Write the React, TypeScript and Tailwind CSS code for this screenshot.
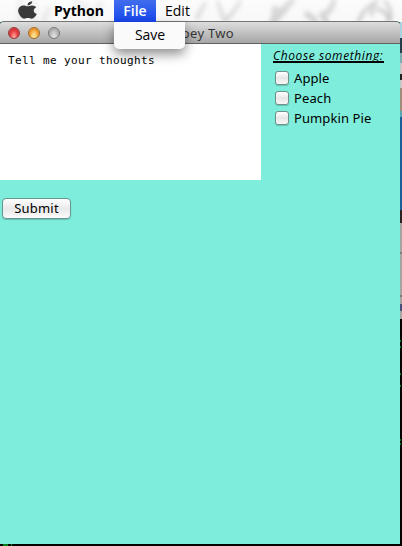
import React from 'react';
import { FaApple } from 'react-icons/fa';

const options = ['Apple', 'Peach', 'Pumpkin Pie'];

function Desktop() {
  return (
    <svg className="absolute inset-0" width="402" height="546" viewBox="0 0 402 546">
      <defs>
        <linearGradient id="bar" x1="0" y1="0" x2="0" y2="1">
          <stop offset="0" stopColor="#fff" stopOpacity=".5" />
          <stop offset="1" stopColor="#f4f4f4" stopOpacity=".25" />
        </linearGradient>
        <filter id="soft" x="-5%" y="-50%" width="110%" height="200%"><feGaussianBlur stdDeviation="1.9" /></filter>
      </defs>
      <rect width="402" height="546" fill="#000" />
      <rect width="402" height="22" fill="#f9faf9" />
      <g filter="url(#soft)" fill="none" stroke="#b9bbb9" strokeLinecap="round">
        <path d="M20 0v21M34 1v20M48 10l-4 10M76 2l10 4M92 17l8-13" strokeWidth="7" opacity=".3" />
        <path d="M218 2q2 8 6 17M240 1q-3 8-14 19M205 3l-8 15" strokeWidth="4" opacity=".75" />
        <path d="M273 21l12-12M292 1l-12 11M275 9v10" strokeWidth="7" opacity=".85" />
        <path d="M334 0q-2 9-8 13M322 14l4 7M307 14l8 6" strokeWidth="6" opacity=".85" />
        <path d="M359 20q6-13 18-19M377 1q-7 8-5 13M377 9q10 1 12 12M385 1q8 9 5 19" strokeWidth="4" />
      </g>
      <rect width="402" height="22" fill="url(#bar)" />
      <rect x="400" y="22" width="2" height="16" fill="#a8d1df" />
      <rect x="400" y="38" width="2" height="15" fill="#263d49" />
      <rect x="400" y="53" width="2" height="10" fill="#7eabb4" />
      <rect x="400" y="63" width="2" height="25" fill="#c6c6c6" />
      <rect x="400" y="74" width="2" height="6" fill="#222" />
      <rect x="400" y="88" width="2" height="23" fill="#9b8d77" />
      <rect x="400" y="111" width="2" height="6" fill="#55a5b5" />
      <rect x="400" y="117" width="2" height="93" fill="#1b5f96" />
      <rect x="400" y="210" width="2" height="13" fill="#272322" />
      <rect x="400" y="223" width="2" height="96" fill="#a5a4a2" />
      <path d="M400 253h2M400 296h2" stroke="#555" />
      <rect x="400" y="304" width="2" height="7" fill="#44517a" />
      <path d="M400 341h1M400 347h1M400 374h1M400 386h1M400 440h1M400 444h1M3 545h5M11 545h1" stroke="#087e1c" strokeWidth="2" />
    </svg>
  );
}

function MenuBar() {
  return (
    <header className="relative flex h-[22px] items-center font-['Open_Sans','Noto_Sans',sans-serif] text-[14px] leading-[22px] text-black">
      <FaApple className="mb-[2px] ml-[18px] h-[20px] w-[19px] shrink-0 text-[#393939]" preserveAspectRatio="none" />
      <span className="ml-[17px] w-[60px] font-bold">Python</span>
      <span className="h-[22px] w-[42px] bg-linear-to-b from-[#416ced] to-[#1745ed] text-center font-semibold text-white">File</span>
      <span className="ml-[9px] font-medium">Edit</span>
      <div className="absolute left-[114px] top-[22px] z-10 h-[27px] w-[71px] rounded-b-[5px] bg-[#fafafa] pl-[21px] leading-[26px] shadow-[0_5px_12px_rgba(0,0,0,0.45)]">
        <span className="font-medium tracking-[-0.1px]">Save</span>
      </div>
    </header>
  );
}

function TitleBar() {
  return (
    <div className="relative flex h-[23px] items-center rounded-t-[4px] border-b border-t border-[#606060] border-t-[#747474] bg-linear-to-b from-[#dedede] to-[#a6a6a6] font-['Noto_Sans',sans-serif]">
      <div className="flex gap-2 pl-2">
        <i className="h-3 w-3 rounded-full border border-[#963a3b] bg-[radial-gradient(ellipse_at_50%_90%,#ffb1a5,#ee4b4c_45%,#d32f35_65%,#f2a5a3)]" />
        <i className="h-3 w-3 rounded-full border border-[#a16826] bg-[radial-gradient(ellipse_at_50%_90%,#ffeda5,#f6bc59_45%,#e78e24_65%,#f8dca6)]" />
        <i className="h-3 w-3 rounded-full border border-[#777] bg-[radial-gradient(ellipse_at_50%_90%,#e5e5e5,#c4c4c4_45%,#aaa_65%,#ddd)]" />
      </div>
      <span className="ml-[118px] whitespace-nowrap text-[13px] leading-5 tracking-[0.3px] text-[#353535]">Joey Two</span>
    </div>
  );
}

export default function App() {
  return (
    <main className="relative h-[546px] w-[402px] overflow-hidden">
      <Desktop />
      <div className="relative z-10"><MenuBar /></div>
      <section className="relative -mt-px h-[523px] w-[400px] rounded-t-[4px] bg-[#7eeddb]">
        <TitleBar />
        <div className="flex">
          <div className="h-[136px] w-[261px] bg-white pl-2 pt-[9px]">
            <span className="block whitespace-nowrap font-['DejaVu_Sans_Mono',monospace] text-[11px] leading-4 tracking-[0.38px] text-black">Tell me your thoughts</span>
          </div>
          <div className="pl-3 pt-[5px]">
            <h2 className="h-[14px] w-[111px] whitespace-nowrap border-b-2 border-black font-['Open_Sans',sans-serif] text-[12px] font-medium italic leading-[14px] tracking-[0.6px] text-black">Choose something:</h2>
            <div className="mt-[5px] pl-[2px]">
              {options.map((option) => (
                <label key={option} className="flex h-5 items-center gap-[5px] whitespace-nowrap font-['Noto_Sans',sans-serif] text-[13px] leading-5 tracking-[0.1px] text-black">
                  <i className="h-[14px] w-[14px] rounded-[3px] border border-[#6d918b] bg-linear-to-b from-white via-[#e7e7e7] to-[#f7f7f7] shadow-[0_1px_1px_#00000030]" />
                  {option}
                </label>
              ))}
            </div>
          </div>
        </div>
        <button className="ml-[2px] mt-[18px] block h-[21px] w-[69px] rounded-[4px] border border-[#66968f] bg-linear-to-b from-white via-[#e9e9e9] to-[#fafafa] font-['Noto_Sans',sans-serif] text-[13px] leading-[19px] tracking-[0.2px] text-black shadow-[0_1px_1px_#00000030]">Submit</button>
      </section>
    </main>
  );
}
